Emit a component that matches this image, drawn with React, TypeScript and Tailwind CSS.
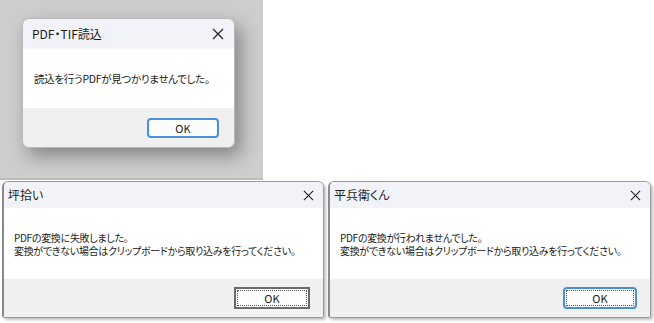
import React from 'react';

const jp = { fontFamily: '"Noto Sans CJK JP", "Noto Sans", sans-serif' };

const CloseIcon: React.FC<{ size?: number }> = ({ size = 11 }) => (
  <svg width={size} height={size} viewBox="0 0 12 12" fill="none" stroke="#222" strokeWidth="1.2">
    <path d="M1 1 L11 11 M11 1 L1 11" />
  </svg>
);

const TopDialog: React.FC = () => (
  <div className="w-[263px] h-[180px] bg-[#cdcdcd] pt-[18px] pl-[22px] border-b-[2px] border-[#bdbdbd]">
    <div className="w-[213px] h-[130px] rounded-[7px] overflow-hidden flex flex-col shadow-[6px_8px_18px_rgba(0,0,0,0.35)] border border-[#b8b8b8]">
      <div className="h-[30px] bg-[#f1f3f8] flex items-center justify-between pl-[9px] pr-[10px]">
        <span className="text-[12px] text-[#1b1b1b] whitespace-nowrap [font-feature-settings:'palt']" style={jp}>PDF・TIF読込</span>
        <CloseIcon size={12} />
      </div>
      <div className="h-[59px] bg-white flex items-center pl-[11px]">
        <span className="text-[10.5px] tracking-[-0.3px] text-[#1b1b1b] whitespace-nowrap [font-feature-settings:'palt']" style={jp}>読込を行うPDFが見つかりませんでした。</span>
      </div>
      <div className="flex-1 bg-[#f0f0f0] flex justify-end items-start pt-[10px] pr-[15px]">
        <div className="w-[72px] h-[20px] rounded-[4px] border-[2px] border-[#4a90d9] bg-[#fdfdfd] flex items-center justify-center text-[11px] text-[#1b1b1b]" style={jp}>OK</div>
      </div>
    </div>
  </div>
);

const BottomDialog: React.FC<{
  title: string;
  lines: string[];
  width: string;
  classic?: boolean;
}> = ({ title, lines, width, classic }) => (
  <div className={`${width} h-[137px] rounded-t-[6px] rounded-b-[3px] overflow-hidden flex flex-col border border-[#9a9a9a] border-l-[2px] border-l-[#8a8a8a] shadow-[2px_2px_3px_rgba(0,0,0,0.25)]`}>
    <div className="h-[26px] bg-[#f1f3f8] flex items-center justify-between pl-[4px] pr-[9px]">
      <span className="text-[12px] text-[#1b1b1b] whitespace-nowrap [font-feature-settings:'palt']" style={jp}>{title}</span>
      <CloseIcon size={11} />
    </div>
    <div className="h-[71px] bg-white flex flex-col justify-center pl-[10px]">
      {lines.map((l) => (
        <div key={l} className="text-[10px] leading-[13px] tracking-[-0.3px] text-[#1b1b1b] whitespace-nowrap [font-feature-settings:'palt']" style={jp}>{l}</div>
      ))}
    </div>
    <div className="flex-1 bg-[#f0f0f0] flex justify-end items-start pt-[8px] pr-[13px]">
      {classic ? (
        <div className="w-[76px] h-[22px] border-[2px] border-[#6a6a6a] bg-[#fdfdfd] p-[1px]">
          <div className="w-full h-full border border-dotted border-[#555] flex items-center justify-center text-[11px] text-[#1b1b1b]" style={jp}>OK</div>
        </div>
      ) : (
        <div className="w-[74px] h-[22px] rounded-[4px] border-[2px] border-[#4a90d9] bg-[#fdfdfd] p-[1px]">
          <div className="w-full h-full border border-dotted border-[#555] flex items-center justify-center text-[11px] text-[#1b1b1b]" style={jp}>OK</div>
        </div>
      )}
    </div>
  </div>
);

export default function App() {
  return (
    <div className="w-[654px] h-[323px] bg-white overflow-hidden">
      <TopDialog />
      <div className="flex gap-[4px] pl-[2px] pt-[1px]">
        <BottomDialog
          title="坪拾い"
          width="w-[322px]"
          classic
          lines={['PDFの変換に失敗しました。', '変換ができない場合はクリップボードから取り込みを行ってください。']}
        />
        <BottomDialog
          title="平兵衛くん"
          width="w-[323px]"
          lines={['PDFの変換が行われませんでした。', '変換ができない場合はクリップボードから取り込みを行ってください。']}
        />
      </div>
    </div>
  );
}
